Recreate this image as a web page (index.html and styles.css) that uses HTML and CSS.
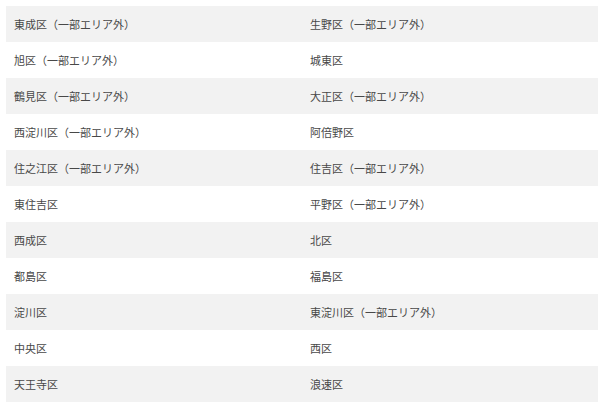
FILE: index.html
```html
<!DOCTYPE html>
<html lang="ja">
<head>
<meta charset="utf-8">
<link rel="stylesheet" href="styles.css">
</head>
<body>
<div class="list">
  <div class="row"><div class="cell">東成区（一部エリア外）</div><div class="cell">生野区（一部エリア外）</div></div>
  <div class="row"><div class="cell">旭区（一部エリア外）</div><div class="cell">城東区</div></div>
  <div class="row"><div class="cell">鶴見区（一部エリア外）</div><div class="cell">大正区（一部エリア外）</div></div>
  <div class="row"><div class="cell">西淀川区（一部エリア外）</div><div class="cell">阿倍野区</div></div>
  <div class="row"><div class="cell">住之江区（一部エリア外）</div><div class="cell">住吉区（一部エリア外）</div></div>
  <div class="row"><div class="cell">東住吉区</div><div class="cell">平野区（一部エリア外）</div></div>
  <div class="row"><div class="cell">西成区</div><div class="cell">北区</div></div>
  <div class="row"><div class="cell">都島区</div><div class="cell">福島区</div></div>
  <div class="row"><div class="cell">淀川区</div><div class="cell">東淀川区（一部エリア外）</div></div>
  <div class="row"><div class="cell">中央区</div><div class="cell">西区</div></div>
  <div class="row"><div class="cell">天王寺区</div><div class="cell">浪速区</div></div>
</div>
</body>
</html>
```
FILE: styles.css
```css
html, body {
  margin: 0;
  padding: 0;
  background: #ffffff;
}
body {
  padding: 6px 8px 0 6px;
  font-family: "Noto Sans CJK JP", "Noto Sans", sans-serif;
  font-size: 11px;
  color: #484848;
}
.list {
  width: 592px;
}
.row {
  display: grid;
  grid-template-columns: 296px 296px;
  height: 36px;
}
.row:nth-child(odd) {
  background: #f2f2f2;
}
.cell {
  display: flex;
  align-items: center;
  padding-left: 8px;
  line-height: 1;
}
```
